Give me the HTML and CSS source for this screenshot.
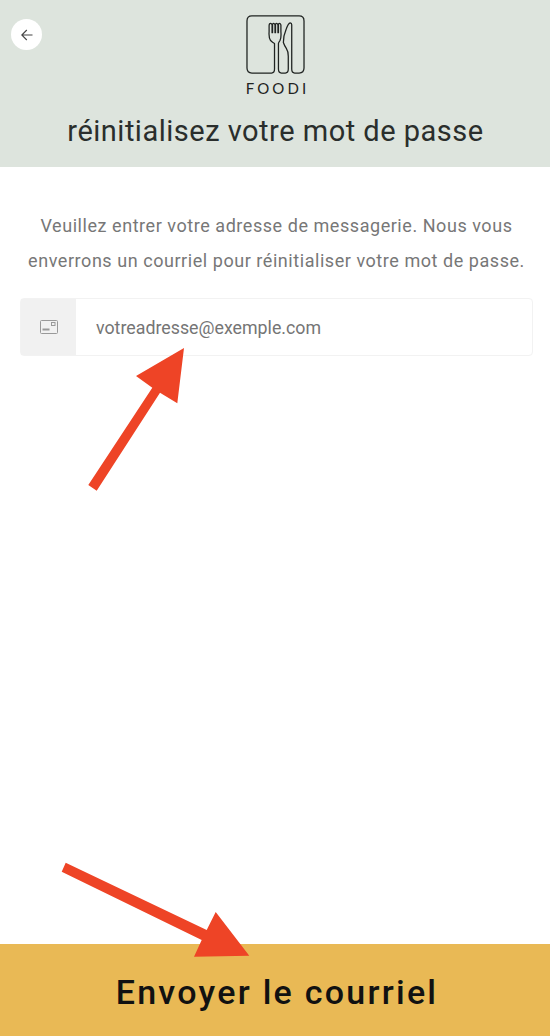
FILE: index.html
```html
<!DOCTYPE html>
<html lang="fr">
<head>
<meta charset="UTF-8" />
<meta name="viewport" content="width=device-width, initial-scale=1" />
<title>Foodi</title>
<link rel="stylesheet" href="styles.css">
</head>
<body>

<div class="page">
  <header class="top">
    <button class="back" aria-label="Retour">
      <svg width="14" height="14" viewBox="0 0 14 14" fill="none" stroke="#444" stroke-width="1.1"><path d="M12.500 7H1.800M6.800 2 1.800 7l5 5"/></svg>
    </button>
    <div class="logo">
      <svg class="logo-mark" width="59" height="59" viewBox="0 0 60 60" fill="none" stroke="#1f2321" stroke-width="1.300" stroke-linejoin="round">
        <path d="M6 1H54Q59 1 59 6V54Q59 59 54 59H49.500Q46.500 59 46.500 55V10Q46.500 8 45 8Q43 8.500 41 14Q38 21 38 28Q39 31 41 34Q43 37 43 42V55Q43 59 40 59H36Q33 59 33 55V29Q33 28 34.500 26Q36 23.500 35.500 17V10Q35 8.500 34 8.500Q33 8.500 33 10V18H32.500V10Q32 8.500 31 8.500Q30 8.500 30 10V18H29.500V10Q29 8.500 28 8.500Q27 8.500 27 10V18H26.500V10Q26 8.500 25 8.500Q23.500 8.500 23.500 11V17Q23 23 25 26Q27 28 29 29V55Q29 59 26 59H6Q1 59 1 54V6Q1 1 6 1Z"/>
      </svg>
      <span class="logo-name">FOODI</span>
    </div>
    <h1>réinitialisez votre mot de passe</h1>
  </header>

  <main class="content">
    <p class="intro">Veuillez entrer votre adresse de messagerie. Nous vous enverrons un courriel pour réinitialiser votre mot de passe.</p>
    <div class="field">
      <div class="field-icon">
        <svg width="18" height="14" viewBox="0 0 18 14" fill="none" stroke="#999" stroke-width="1"><rect x="0.500" y="0.500" width="17" height="13" rx="1"/><rect x="11.500" y="2.500" width="3.500" height="3"/><path d="M2.500 9.500h7" stroke-width="2"/></svg>
      </div>
      <span class="field-text">votreadresse@exemple.com</span>
    </div>
  </main>

  <button class="send">Envoyer le courriel</button>

  <svg class="marks" width="550" height="1036" viewBox="0 0 550 1036" fill="#ee4426">
    <polygon points="88.300,485 152.300,387.700 136,376 184,348 177.300,403.300 160,392.700 96.700,490.700"/>
    <polygon points="65.700,862.700 206.700,930 215.700,912 249.300,955.700 194,956.700 201.700,940 61.700,871.700"/>
  </svg>
</div>

</body>
</html>
```

FILE: styles.css
```css
* {
  box-sizing: border-box;
}
body {
  margin: 0;
  font-family: Roboto, sans-serif;
  background: #fff;
}
.page {
  position: relative;
  width: 550px;
  height: 1036px;
  display: flex;
  flex-direction: column;
  overflow: hidden;
}
.top {
  position: relative;
  height: 167px;
  padding-top: 15px;
  background: #dde4dd;
  display: flex;
  flex-direction: column;
  align-items: center;
}
.back {
  position: absolute;
  left: 11px;
  top: 19px;
  width: 31px;
  height: 31px;
  padding: 0;
  border: none;
  border-radius: 50%;
  background: #fff;
  display: flex;
  align-items: center;
  justify-content: center;
}
.logo {
  display: flex;
  flex-direction: column;
  align-items: center;
}
.logo-mark {
  margin-left: 2px;
}
.logo-name {
  margin-top: 5px;
  margin-left: 2px;
  margin-right: -3px;
  font-family: Lato, sans-serif;
  font-size: 15px;
  line-height: 18px;
  letter-spacing: 3.100px;
  color: #1f2321;
}
h1 {
  margin: 17px 0 0 1px;
  font-size: 29px;
  line-height: 34px;
  font-weight: 400;
  letter-spacing: 0.500px;
  color: #2a2e2c;
}
.content {
  flex: 1;
  padding: 41px 17px 0 20px;
}
.intro {
  margin: 0;
  font-size: 18px;
  line-height: 35px;
  letter-spacing: 0.550px;
  text-align: center;
  color: #777;
}
.field {
  margin-top: 20px;
  height: 58px;
  display: flex;
  align-items: center;
  border: 1px solid #f2f2f2;
  border-radius: 4px;
}
.field-icon {
  width: 55px;
  height: 100%;
  background: #f1f1f1;
  display: flex;
  align-items: center;
  justify-content: center;
}
.field-text {
  margin-left: 20px;
  font-size: 17.800px;
  color: #757575;
}
.send {
  height: 92px;
  padding: 3px 0 0 4px;
  border: none;
  background: #e9b955;
  font-family: Roboto, sans-serif;
  font-size: 34px;
  font-weight: 500;
  letter-spacing: 2.250px;
  color: #111;
}
.marks {
  position: absolute;
  left: 0;
  top: 0;
  pointer-events: none;
}
```
